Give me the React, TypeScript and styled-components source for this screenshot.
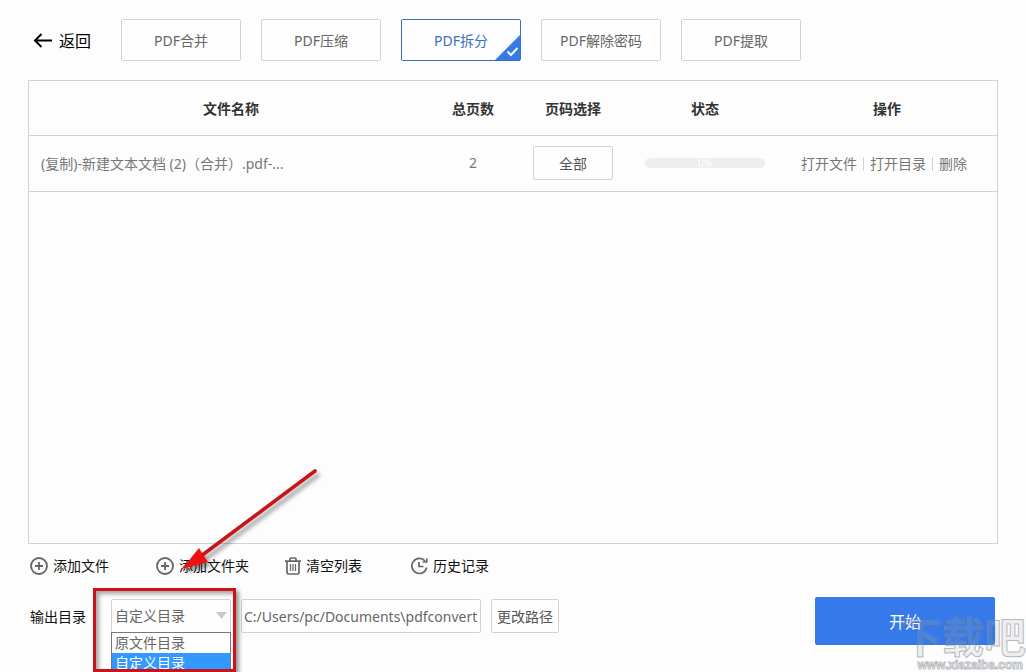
import React from "react";
import styled, { createGlobalStyle } from "styled-components";

const GlobalStyle = createGlobalStyle`
  * { box-sizing: border-box; }
  body {
    margin: 0;
    background: #fdfdfd;
    font-family: "Noto Sans", "Noto Sans CJK SC", sans-serif;
    font-size: 14px;
    line-height: 20px;
    color: #111;
  }
  button, input, select { font: inherit; }
`;

const Page = styled.main`
  position: relative;
  display: flex;
  flex-direction: column;
  min-height: 100vh;
  overflow: hidden;
`;

const Header = styled.header`
  display: flex;
  align-items: center;
  gap: 30px;
  padding: 19px 28px;
`;

const BackButton = styled.button`
  display: flex;
  align-items: center;
  gap: 6px;
  margin-left: 5px;
  padding: 2px 0 0;
  border: 0;
  background: none;
  color: #000;
  font-size: 16px;
  cursor: pointer;
`;

const Tabs = styled.nav`
  display: flex;
  gap: 20px;
`;

const Tab = styled.button<{ $active?: boolean }>`
  position: relative;
  width: 120px;
  height: 42px;
  padding: 2px 0 0;
  border: 1px solid ${(p) => (p.$active ? "#3a70c4" : "#d2d2d4")};
  border-radius: 2px;
  background: #fefefe;
  color: ${(p) => (p.$active ? "#3a70c4" : "#666")};
  cursor: pointer;
`;

const TabMark = styled.svg`
  position: absolute;
  right: 0;
  bottom: 0;
`;

const Panel = styled.section`
  flex: 1;
  margin: 0 28px;
  border: 1px solid #d2d2d4;
`;

const FileTable = styled.table`
  width: 100%;
  table-layout: fixed;
  border-collapse: separate;
  border-spacing: 0;
`;

const HeadCell = styled.th<{ $width?: number }>`
  width: ${(p) => (p.$width ? `${p.$width}px` : "auto")};
  height: 55px;
  padding: 2px 0 0;
  border-bottom: 1px solid #d2d2d4;
  color: #333;
  font-weight: 700;
`;

const Cell = styled.td<{ $left?: boolean }>`
  height: 56px;
  padding: 0 0 ${(p) => (p.$left ? "0 12px" : "2px 0")};
  border-bottom: 1px solid #d2d2d4;
  color: #777;
  text-align: ${(p) => (p.$left ? "left" : "center")};
`;

const OutlineButton = styled.button<{ $width: number }>`
  width: ${(p) => p.$width}px;
  height: 34px;
  padding: 2px 0 0;
  border: 1px solid #d2d2d4;
  border-radius: 2px;
  background: #fefefe;
  color: #555;
  vertical-align: middle;
  cursor: pointer;
`;

const Progress = styled.div`
  width: 120px;
  height: 10px;
  margin: 0 auto;
  border-radius: 5px;
  background: #eeedf0;
  color: #fff;
  font-size: 10px;
  line-height: 10px;
`;

const Actions = styled.div`
  display: flex;
  justify-content: center;
  align-items: center;
  padding: 2px 6px 0 0;
`;

const ActionLink = styled.a`
  padding: 0 6px;
  color: #777;
  line-height: 14px;
  text-decoration: none;

  & + & { border-left: 1px solid #d2d2d4; }
`;

const Footer = styled.footer`
  height: 128px;
  padding: 12px 31px 0 30px;
`;

const Toolbar = styled.div`
  display: grid;
  grid-template-columns: 126px 129px 126px auto;
  justify-content: start;
`;

const ToolButton = styled.button`
  display: flex;
  align-items: center;
  gap: 5px;
  padding: 0;
  border: 0;
  background: none;
  color: #111;
  cursor: pointer;

  svg { color: #666; }
`;

const OutputRow = styled.div`
  display: flex;
  align-items: flex-start;
  justify-content: space-between;
  margin-top: 21px;
`;

const OutputFields = styled.div`
  display: flex;
  align-items: center;
  padding-top: 2px;
`;

const OutputLabel = styled.label`
  width: 81px;
  padding-top: 2px;
`;

const SelectField = styled.div`
  position: relative;
  width: 120px;
  margin-right: 10px;
`;

const Select = styled.select`
  display: block;
  width: 100%;
  height: 34px;
  padding: 0 3px;
  border: 1px solid #d2d2d4;
  border-radius: 2px;
  background: #fefefe;
  color: #666;
  appearance: none;
`;

const Caret = styled.svg`
  position: absolute;
  top: 13px;
  right: 4px;
  pointer-events: none;
`;

const Options = styled.ul`
  position: absolute;
  top: 33px;
  left: 0;
  width: 100%;
  margin: 0;
  padding: 0;
  border: 1px solid #777;
  background: #fff;
  list-style: none;
`;

const Option = styled.li<{ $selected?: boolean }>`
  padding: 0 3px;
  background: ${(p) => (p.$selected ? "#3399ff" : "#fff")};
  color: ${(p) => (p.$selected ? "#fff" : "#666")};
`;

const Highlight = styled.div`
  position: absolute;
  top: -11px;
  left: -18px;
  width: 143px;
  height: 84px;
  border: 3px solid #c8141a;
  box-shadow: 3px 3px 4px rgba(0, 0, 0, 0.4), inset 3px 3px 4px rgba(0, 0, 0, 0.35);
  pointer-events: none;
`;

const Pointer = styled.svg`
  position: absolute;
  left: 70px;
  bottom: 63px;
  pointer-events: none;
  filter: drop-shadow(3px 4px 2px rgba(0, 0, 0, 0.4));
`;

const PathInput = styled.input`
  width: 240px;
  height: 34px;
  margin-right: 10px;
  padding: 0 0 0 2px;
  border: 1px solid #d2d2d4;
  border-radius: 2px;
  background: #fefefe;
  color: #666;
`;

const StartButton = styled.button`
  width: 180px;
  height: 48px;
  padding: 2px 0 0;
  border: 0;
  border-radius: 2px;
  background: #3579ea;
  color: #fff;
  font-size: 16px;
  cursor: pointer;
`;

const Watermark = styled.div`
  position: absolute;
  right: 0;
  bottom: 0;
  display: flex;
  flex-direction: column;
  align-items: flex-end;
  color: rgba(170, 175, 185, 0.2);
  font-weight: 700;
  pointer-events: none;
  -webkit-text-stroke: 1px rgba(120, 125, 135, 0.5);
`;

const WatermarkName = styled.span`
  font-size: 42px;
  line-height: 42px;
`;

const WatermarkSite = styled.span`
  padding-right: 3px;
  color: #fdfdfd;
  font-family: "Liberation Sans", sans-serif;
  font-size: 12px;
  line-height: 14px;
`;

const PlusIcon = () => (
  <svg width="18" height="18" viewBox="0 0 18 18" fill="none" stroke="currentColor" aria-hidden="true">
    <circle cx="9" cy="9" r="8" strokeWidth="1.8" />
    <path d="M9 5v8M5 9h8" strokeWidth="1.8" />
  </svg>
);

const TrashIcon = () => (
  <svg width="16" height="18" viewBox="0 0 16 18" fill="none" stroke="currentColor" strokeWidth="1.7" aria-hidden="true">
    <path d="M0 4.2h16M5 4V2.2Q5 1 6.2 1h3.6Q11 1 11 2.2V4M2 4.5v11Q2 17 3.5 17h9q1.5 0 1.5-1.5v-11" />
    <path d="M5.5 7v7M8 7v7M10.500 7v7" strokeWidth="1.2" />
  </svg>
);

const HistoryIcon = () => (
  <svg width="17" height="18" viewBox="0 0 17 18" fill="none" stroke="currentColor" strokeWidth="1.7" aria-hidden="true">
    <path d="M14 4A7.500 7.500 0 1 0 15.700 10.500" />
    <path d="M8 5v4.500h4.500" />
    <path d="M15.700 1.500V5h-4" />
  </svg>
);

const tabs = ["PDF合并", "PDF压缩", "PDF拆分", "PDF解除密码", "PDF提取"];
const folders = ["原文件目录", "自定义目录"];

export default function App() {
  const [tab, setTab] = React.useState("PDF拆分");
  const [folder, setFolder] = React.useState("自定义目录");

  return (
    <>
      <GlobalStyle />
      <Page>
        <Header>
          <BackButton type="button">
            <svg width="20" height="16" viewBox="0 0 20 16" fill="none" stroke="currentColor" strokeWidth="2" aria-hidden="true">
              <path d="M8.500 1 2 7.500 8.500 14M2 7.500h17" />
            </svg>
            返回
          </BackButton>
          <Tabs>
            {tabs.map((name) => (
              <Tab key={name} type="button" $active={name === tab} onClick={() => setTab(name)}>
                {name}
                {name === tab && (
                  <TabMark width="25" height="25" viewBox="0 0 25 25" aria-hidden="true">
                    <path d="M25 0v25H0Z" fill="#3579ea" />
                    <path d="m12.500 16.500 3.500 3.500 6.500-7" fill="none" stroke="#fff" strokeWidth="2" />
                  </TabMark>
                )}
              </Tab>
            ))}
          </Tabs>
        </Header>

        <Panel>
          <FileTable>
            <thead>
              <tr>
                <HeadCell>文件名称</HeadCell>
                <HeadCell $width={80}>总页数</HeadCell>
                <HeadCell $width={120}>页码选择</HeadCell>
                <HeadCell $width={144}>状态</HeadCell>
                <HeadCell $width={220}>操作</HeadCell>
              </tr>
            </thead>
            <tbody>
              <tr>
                <Cell $left>(复制)-新建文本文档 (2)（合并）.pdf-...</Cell>
                <Cell>2</Cell>
                <Cell>
                  <OutlineButton type="button" $width={80}>全部</OutlineButton>
                </Cell>
                <Cell>
                  <Progress role="progressbar" aria-label="进度" aria-valuenow={0}>0%</Progress>
                </Cell>
                <Cell>
                  <Actions>
                    <ActionLink href="#file">打开文件</ActionLink>
                    <ActionLink href="#folder">打开目录</ActionLink>
                    <ActionLink href="#delete">删除</ActionLink>
                  </Actions>
                </Cell>
              </tr>
            </tbody>
          </FileTable>
        </Panel>

        <Footer>
          <Toolbar>
            <ToolButton type="button"><PlusIcon />添加文件</ToolButton>
            <ToolButton type="button"><PlusIcon />添加文件夹</ToolButton>
            <ToolButton type="button"><TrashIcon />清空列表</ToolButton>
            <ToolButton type="button"><HistoryIcon />历史记录</ToolButton>
          </Toolbar>
          <OutputRow>
            <OutputFields>
              <OutputLabel htmlFor="folder">输出目录</OutputLabel>
              <SelectField>
                <Select id="folder" value={folder} onChange={(e) => setFolder(e.target.value)}>
                  {folders.map((name) => <option key={name}>{name}</option>)}
                </Select>
                <Caret width="11" height="7" viewBox="0 0 11 7" aria-hidden="true">
                  <path d="M0 0h11L5.500 7Z" fill="#c8c8ca" />
                </Caret>
                <Options>
                  {folders.map((name) => (
                    <Option key={name} $selected={name === folder} onClick={() => setFolder(name)}>{name}</Option>
                  ))}
                </Options>
                <Highlight />
                <Pointer width="139" height="102" viewBox="0 0 139 102" aria-hidden="true">
                  <path d="M134 3 20 88" stroke="#c8141a" strokeWidth="3.6" strokeLinecap="round" />
                  <path d="M1 101 18 80l3 5 6 9Z" fill="#f01010" />
                </Pointer>
              </SelectField>
              <PathInput aria-label="输出路径" defaultValue="C:/Users/pc/Documents\pdfconvert" />
              <OutlineButton type="button" $width={68}>更改路径</OutlineButton>
            </OutputFields>
            <StartButton type="button">开始</StartButton>
          </OutputRow>
        </Footer>

        <Watermark aria-hidden="true">
          <WatermarkName>下载吧</WatermarkName>
          <WatermarkSite>www.xiazaiba.com</WatermarkSite>
        </Watermark>
      </Page>
    </>
  );
}
